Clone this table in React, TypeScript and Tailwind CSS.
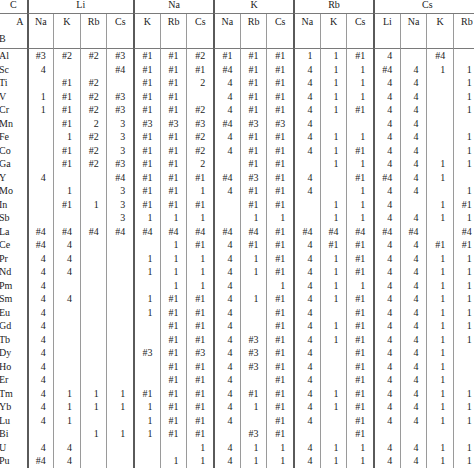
import React from "react";

const groups = [
  { name: "Li", cols: ["Na", "K", "Rb", "Cs"] },
  { name: "Na", cols: ["K", "Rb", "Cs"] },
  { name: "K", cols: ["Na", "Rb", "Cs"] },
  { name: "Rb", cols: ["Na", "K", "Cs"] },
  { name: "Cs", cols: ["Li", "Na", "K", "Rb"] },
];

const groupStart = new Set([0, 4, 7, 10, 13]);

const rows: [string, string][] = [
  ["Al", "#3 #2 #2 #3 #1 #1 #2 #1 #1 #1 1 1 #1 4 - #4 -"],
  ["Sc", "4 - - #4 #1 #1 #1 #4 #1 #1 4 1 1 #4 4 1 1"],
  ["Ti", "- #1 #2 - #1 #1 2 4 #1 #1 4 1 1 4 4 - 1"],
  ["V", "1 #1 #2 #3 #1 #1 - 4 #1 #1 4 1 1 4 4 - 1"],
  ["Cr", "1 #1 #2 #3 #1 #1 #2 4 #1 #1 4 1 #1 4 4 - 1"],
  ["Mn", "- #1 2 3 #3 #3 #3 #4 #3 #3 4 - - 4 4 - -"],
  ["Fe", "- 1 #2 3 #1 #1 #2 4 #1 #1 4 1 1 4 4 - 1"],
  ["Co", "- #1 #2 3 #1 #1 #2 4 #1 #1 4 1 #1 4 4 - 1"],
  ["Ga", "- #1 #2 #3 #1 #1 2 - #1 #1 - 1 1 4 4 1 1"],
  ["Y", "4 - - #4 #1 #1 #1 #4 #3 #1 4 - #1 #4 4 1 -"],
  ["Mo", "- 1 - 3 #1 #1 1 4 #1 #1 4 - 1 4 4 - 1"],
  ["In", "- #1 1 3 #1 #1 #1 - #1 #1 - 1 1 4 - 1 #1"],
  ["Sb", "- - - 3 1 1 1 - 1 1 - 1 1 4 4 1 1"],
  ["La", "#4 #4 #4 #4 #4 #4 #4 #4 #4 #1 #4 #4 #4 #4 #4 - #4"],
  ["Ce", "#4 4 - - - 1 #1 4 #1 #1 4 #1 #1 4 4 #1 #1"],
  ["Pr", "4 4 - - 1 1 1 4 1 #1 4 1 #1 4 4 1 1"],
  ["Nd", "4 4 - - 1 1 1 4 1 #1 4 1 #1 4 4 1 1"],
  ["Pm", "4 - - - - 1 1 4 - 1 4 1 1 4 4 1 1"],
  ["Sm", "4 4 - - 1 #1 #1 4 1 #1 4 1 #1 4 4 1 1"],
  ["Eu", "4 - - - 1 #1 #1 4 - #1 4 - #1 4 4 1 1"],
  ["Gd", "4 - - - - #1 #1 4 - #1 4 1 #1 4 4 1 1"],
  ["Tb", "4 - - - - #1 #1 4 #3 #1 4 1 #1 4 4 1 1"],
  ["Dy", "4 - - - #3 #1 #3 4 #3 #1 4 - #1 4 4 1 -"],
  ["Ho", "4 - - - - #1 #1 4 #3 #1 4 - #1 4 4 1 -"],
  ["Er", "4 - - - - #1 #1 4 - #1 4 - #1 4 4 1 -"],
  ["Tm", "4 1 1 1 #1 #1 #1 4 #1 #1 4 1 #1 4 4 1 1"],
  ["Yb", "4 1 1 1 1 #1 #1 4 1 #1 4 1 #1 4 4 1 1"],
  ["Lu", "4 1 - - 1 #1 #1 4 - #1 4 - #1 4 4 1 1"],
  ["Bi", "- - 1 1 1 #1 #1 - #3 #1 - - #1 - - - -"],
  ["U", "4 4 - - - - 1 4 1 1 4 1 1 4 4 1 1"],
  ["Pu", "#4 4 - - - 1 1 4 1 1 4 1 1 4 4 1 1"],
];

const subCols = groups.flatMap((g) => g.cols);

function lineClass(i: number) {
  return groupStart.has(i) ? "border-l-2 border-[#5a5a5a]" : "border-l border-[#9a9a9a]";
}

export default function App() {
  return (
    <div className="w-[474px] h-[468px] overflow-hidden bg-white text-[#1c1c1c] font-['Liberation_Serif',serif] text-[10px]">
      <div className="grid w-[480px] grid-cols-[26.5px_repeat(17,26.67px)]">
        {/* header row 1 */}
        <div className="h-[14px] border-b border-[#7a7a7a] text-center">
          <span className="block leading-[9px]">C</span>
        </div>
        {groups.map((g) => (
          <div
            key={g.name}
            className={`h-[14px] border-b border-b-[#7a7a7a] border-l-2 border-l-[#5a5a5a] text-center ${
              g.cols.length === 4 ? "col-span-4" : "col-span-3"
            }`}
          >
            <span className="block leading-[9px]">{g.name}</span>
          </div>
        ))}

        {/* header row 2 */}
        <div className="h-[35px] border-b border-[#7a7a7a] flex flex-col pt-[2.5px] leading-[10px]">
          <span className="text-right pr-[3px]">A</span>
          <span className="mt-[7px] -ml-[1px]">B</span>
        </div>
        {subCols.map((c, i) => (
          <div
            key={i}
            className={`h-[35px] border-b border-b-[#7a7a7a] ${lineClass(i)} text-center pt-[2.5px] leading-[10px]`}
          >
            {c}
          </div>
        ))}

        {/* data rows */}
        {rows.map(([label, vals]) => {
          const cells = vals.split(" ");
          return (
            <React.Fragment key={label}>
              <div className="h-[13.5px] pt-[1px] leading-[12.5px] whitespace-nowrap">
                <span className="inline-block -ml-[1px]">{label}</span>
              </div>
              {cells.map((v, i) => (
                <div
                  key={i}
                  className={`h-[13.5px] pt-[1px] leading-[12.5px] ${lineClass(i)} flex justify-center`}
                >
                  <span className="inline-block w-[10px] text-right whitespace-nowrap">
                    {v === "-" ? "" : v}
                  </span>
                </div>
              ))}
            </React.Fragment>
          );
        })}
      </div>
    </div>
  );
}
